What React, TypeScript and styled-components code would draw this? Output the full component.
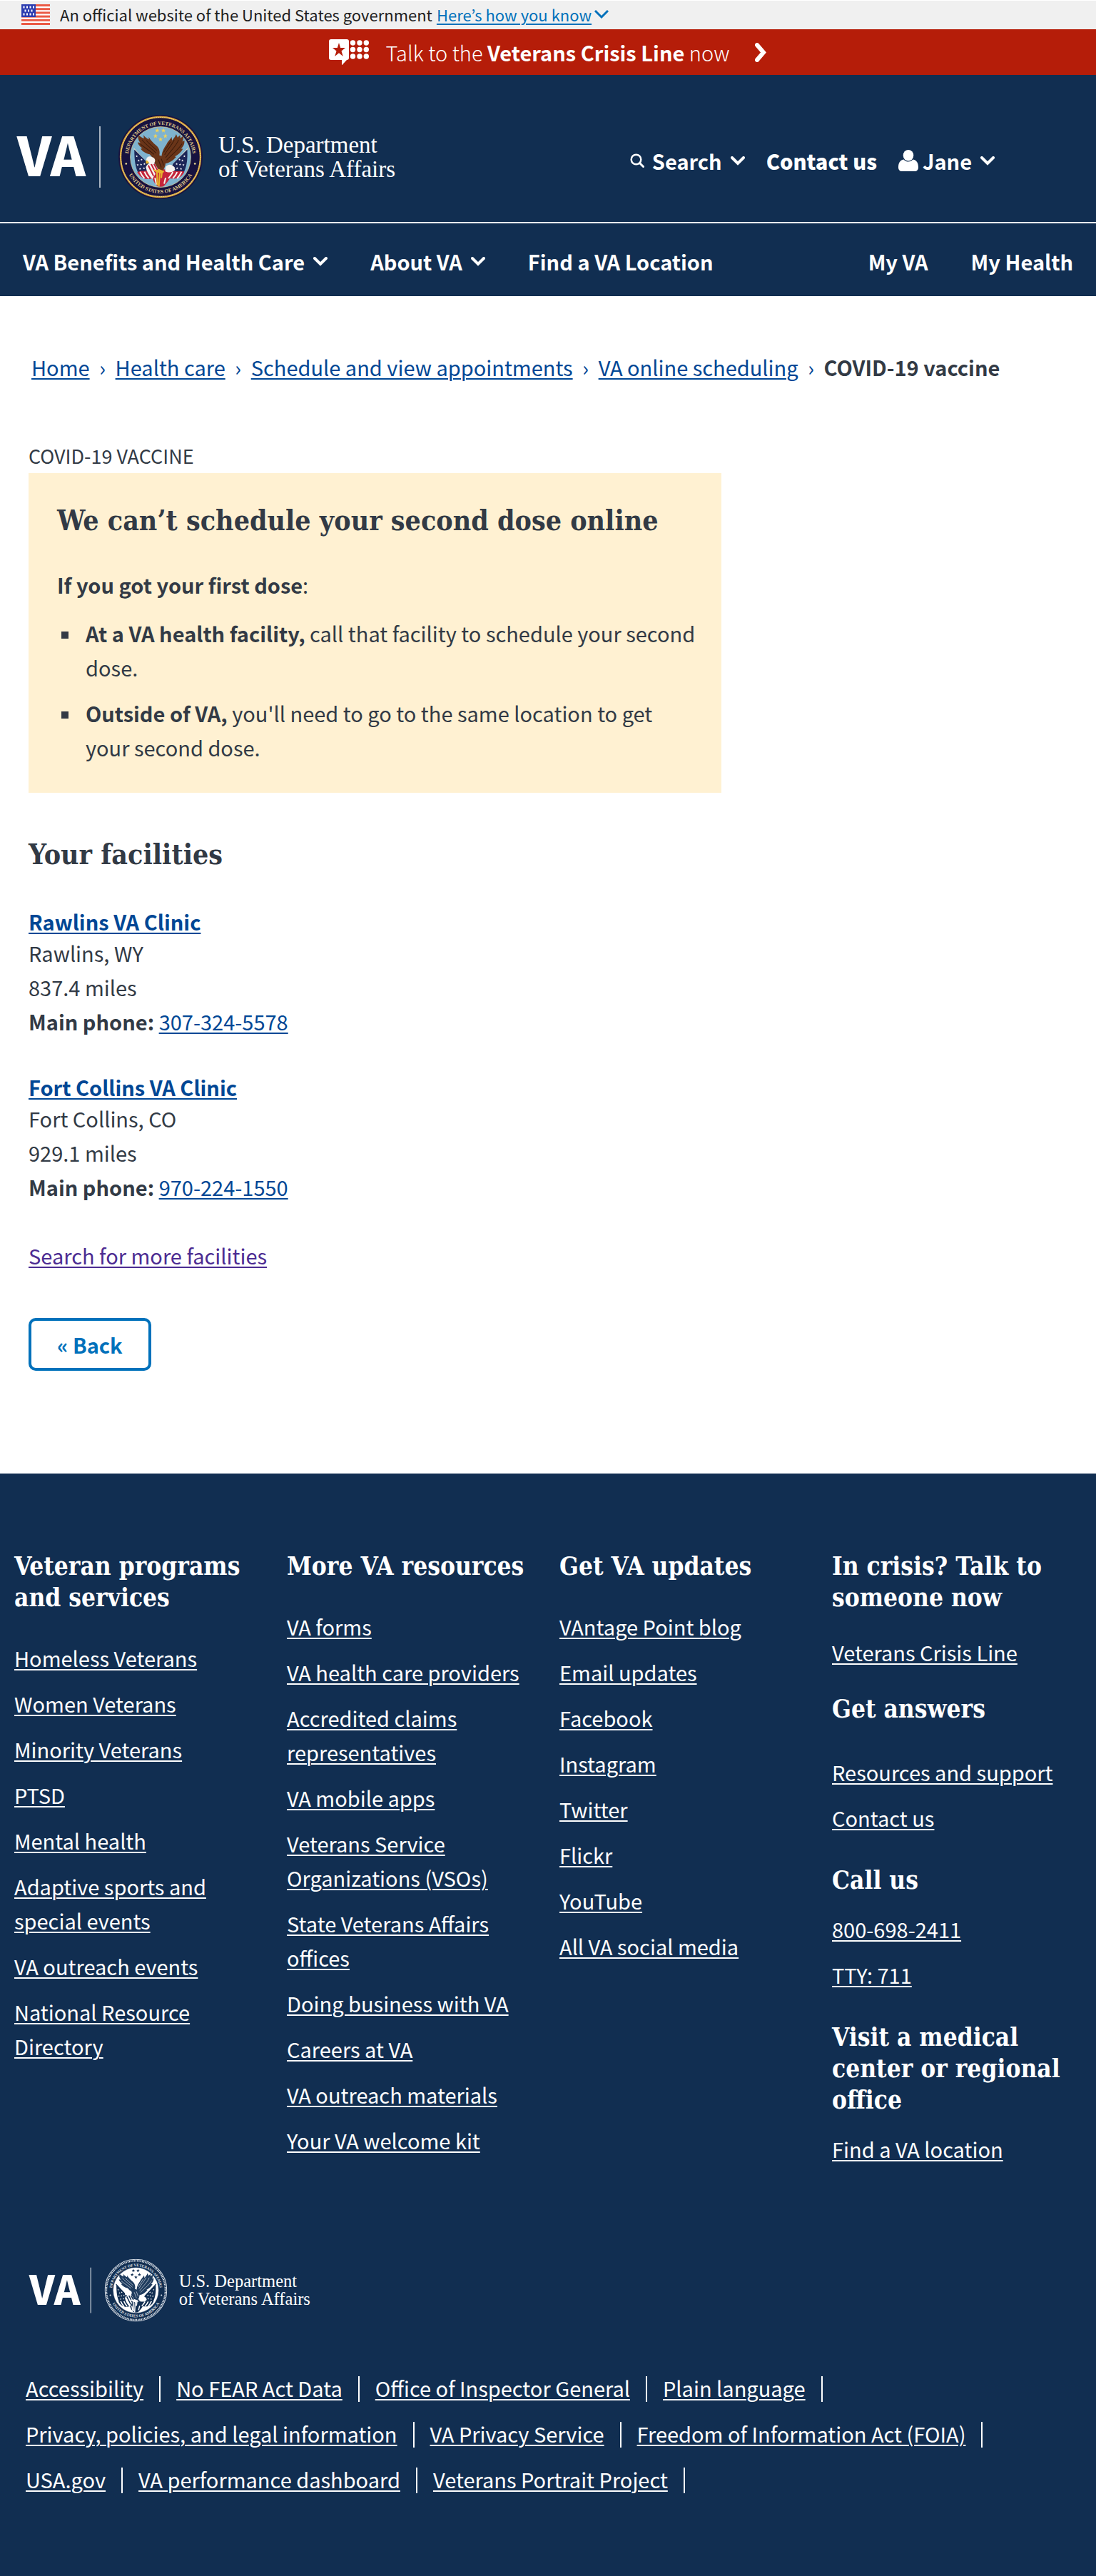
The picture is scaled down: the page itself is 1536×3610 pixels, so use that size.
import React from "react";
import styled, { createGlobalStyle } from "styled-components";

const sans = `"Noto Sans CJK KR", "Noto Sans", sans-serif`;
const slab = `"DejaVu Serif Condensed", "DejaVu Serif", serif`;
const navy = "#112e51";
const ink = "#323a45";
const linkBlue = "#004795";
const brightBlue = "#0071bb";

const GlobalStyle = createGlobalStyle`
  *, *::before, *::after { box-sizing: border-box; }
  body { margin: 0; background: #fff; color: ${ink}; font: 400 29px/48px ${sans}; }
  h1, h2, h3, p, ul, ol { margin: 0; padding: 0; }
  ul, ol { list-style: none; }
  a {
    color: ${linkBlue};
    text-decoration: underline;
    text-decoration-thickness: 2px;
    text-underline-offset: 3px;
  }
  button { font: inherit; color: inherit; background: none; border: 0; padding: 0; cursor: pointer; }
  svg { display: block; flex: none; }
`;

/* ---------- Government banner ---------- */

const GovBanner = styled.div`
  display: flex;
  align-items: center;
  height: 41px;
  padding: 0 30px 2px;
  border-top: 1px solid #fff;
  background: #f0f0f0;
  color: #212121;
  font-size: 22px;
  line-height: 36px;
`;

const BannerText = styled.span`
  margin: 0 6px 0 14px;
`;

const BannerToggle = styled.button`
  display: flex;
  align-items: center;
  color: ${brightBlue};
  text-decoration: underline;
  text-decoration-thickness: 2px;
  text-underline-offset: 3px;
  gap: 4px;
`;

/* ---------- Crisis line ---------- */

const CrisisLink = styled.a`
  display: flex;
  align-items: center;
  justify-content: center;
  height: 64px;
  background: #b51d09;
  color: #fff;
  font-weight: 300;
  text-decoration: none;
`;

const CrisisText = styled.span`
  margin: 0 36px 0 24px;
  b { font-weight: 700; }
`;

/* ---------- Header ---------- */

const Masthead = styled.header`
  background: ${navy};
  color: #fff;
`;

const MastheadTop = styled.div`
  display: flex;
  align-items: center;
  justify-content: space-between;
  height: 208px;
  padding: 24px 142px 0 24px;
  border-bottom: 2px solid #fff;
`;

const Tools = styled.div`
  display: flex;
  align-items: center;
  gap: 30px;
  padding-top: 10px;
  font-weight: 700;
`;

const Tool = styled.button<{ $gap: number }>`
  display: flex;
  align-items: center;
  gap: ${(p) => p.$gap}px;
  font-weight: 700;
`;

const MenuLabel = styled.span`
  display: flex;
  align-items: center;
  gap: 12px;
`;

const HeaderLink = styled.a<{ $heavy?: boolean }>`
  color: #fff;
  font-weight: ${(p) => (p.$heavy ? 900 : 700)};
  text-decoration: none;
`;

const NavBar = styled.nav`
  display: flex;
  align-items: center;
  gap: 60px;
  height: 102px;
  padding: 4px 32px 0;
`;

const NavButton = styled.button`
  display: flex;
  align-items: center;
  gap: 12px;
  font-weight: 700;
`;

const NavSpacer = styled.div`
  flex: 1;
  margin-right: -60px;
`;

/* ---------- Main ---------- */

const Main = styled.main`
  padding: 75px 40px 144px;
`;

const Crumbs = styled.ol`
  display: flex;
  flex-wrap: wrap;
  padding-left: 4px;
  margin-bottom: 77px;

  li { display: flex; }
  li + li::before {
    content: "›";
    width: 36px;
    text-align: center;
    color: ${linkBlue};
  }
`;

const CurrentCrumb = styled.span`
  font-weight: 700;
`;

const Content = styled.div`
  width: 66.667%;
`;

const PageLabel = styled.h1`
  font-size: 27px;
  font-weight: 400;
  line-height: 48px;
  text-transform: uppercase;
`;

const Title = styled.h2`
  font: 700 39px/52px ${slab};
`;

const Notice = styled.section`
  padding: 40px 32px 40px 40px;
  background: #fff1d2;
  p { margin: 40px 0 20px; }
`;

const BulletList = styled.ul`
  display: grid;
  gap: 16px;

  li {
    display: flex;
  }
  li::before {
    content: "";
    flex: none;
    width: 10px;
    height: 10px;
    margin: 22px 24px 0 6px;
    background: ${ink};
  }
`;

const Facilities = styled.section`
  padding-top: 60px;
`;

const FacilityList = styled.ul`
  display: grid;
  gap: 48px;
  margin: 48px 0;
`;

const FacilityName = styled.h3`
  font-size: 29px;
  font-weight: 700;
  line-height: 40px;
`;

const VisitedLink = styled.a`
  color: #4c2c92;
`;

const BackButton = styled.button`
  display: block;
  margin-top: 64px;
  height: 74px;
  padding: 0 36px;
  border: 4px solid ${brightBlue};
  border-radius: 10px;
  color: ${brightBlue};
  font-weight: 700;
`;

/* ---------- Footer ---------- */

const FooterArea = styled.footer`
  padding: 108px 28px 116px 20px;
  background: ${navy};
  color: #fff;
  a { color: #fff; }
`;

const FooterGrid = styled.div`
  display: grid;
  grid-template-columns: repeat(4, 1fr);
  column-gap: 40px;
  margin-bottom: 130px;
`;

const FooterHeading = styled.h2<{ $top?: number }>`
  margin-top: ${(p) => p.$top ?? 0}px;
  font: 700 35px/44px ${slab};
`;

const FooterList = styled.ul<{ $top?: number }>`
  display: grid;
  gap: 16px;
  margin-top: ${(p) => p.$top ?? 38}px;
`;

const FooterBase = styled.div`
  padding: 0 8px 0 16px;
`;

const FooterLogo = styled.div`
  padding-left: 5px;
  margin-bottom: 76px;
`;

const LegalLinks = styled.ul`
  display: flex;
  flex-wrap: wrap;
  gap: 28px 22px;

  li {
    padding: 0 22px 4px 0;
    border-right: 2px solid #fff;
    line-height: 32px;
  }
`;

/* ---------- Drawings ---------- */

const Chevron = () => (
  <svg width="20" height="13" viewBox="0 0 20 13" fill="none" stroke="currentColor" strokeWidth="4" aria-hidden="true">
    <path d="M2 2l8 8 8-8" strokeLinecap="round" strokeLinejoin="miter" />
  </svg>
);

const ThinChevron = () => (
  <svg width="20" height="13" viewBox="0 0 20 13" fill="none" stroke="currentColor" strokeWidth="3" aria-hidden="true">
    <path d="M1 1l9 9 9-9" />
  </svg>
);

const RightChevron = () => (
  <svg width="17" height="27" viewBox="0 0 17 27" fill="none" stroke="currentColor" strokeWidth="6" aria-hidden="true">
    <path d="M3 3l9 10.500L3 24" strokeLinecap="round" />
  </svg>
);

const SearchIcon = () => (
  <svg width="20" height="20" viewBox="0 0 20 20" fill="none" stroke="currentColor" strokeWidth="2.500" aria-hidden="true">
    <circle cx="8.500" cy="8.500" r="6.800" />
    <path d="M13.500 13.500l5 5" strokeWidth="3" strokeLinecap="round" />
  </svg>
);

const UserIcon = () => (
  <svg width="28" height="30" viewBox="0 0 28 30" fill="currentColor" aria-hidden="true">
    <ellipse cx="14" cy="7.700" rx="7.300" ry="7.700" />
    <path d="M7.500 13.500C2 14.500 0 19 0 24.500 0 28 2 30 5 30h18c3 0 5-2 5-5.500 0-5.500-2-10-7.500-11-1.800 2-4 3-6.500 3s-4.700-1-6.500-3z" />
  </svg>
);

const Flag = () => (
  <svg width="40" height="29" viewBox="0 0 40 29" aria-hidden="true">
    <rect width="40" height="29" fill="#fff" />
    {[0, 1, 2, 3, 4, 5].map((i) => (
      <rect key={i} y={i * 5.2} width="40" height="3" fill="#ea5a45" />
    ))}
    <rect width="20" height="18" fill="#2c3db0" />
    {[3.5, 8.5, 13.5].map((y, row) =>
      (row === 1 ? [5.5, 10, 14.5] : [3.5, 8, 12.5, 17]).map((x) => (
        <rect key={`${x}-${y}`} x={x - 1} y={y - 1} width="2" height="3" fill="#fff" />
      ))
    )}
  </svg>
);

const CrisisIcon = () => (
  <svg width="56" height="36" viewBox="0 0 56 36" fill="#fff" aria-hidden="true">
    <path d="M3 0h22a3 3 0 0 1 3 3v23a3 3 0 0 1-3 3l-6.500 7H18v-7H3a3 3 0 0 1-3-3V3a3 3 0 0 1 3-3z" />
    <path fill="#b51d09" d="M14 5l2.200 7H23l-5.500 4.400L19.800 24 14 19.300 8.200 24l2.300-7.600L5 12h6.800z" />
    {[5, 14.5, 24].map((y) =>
      [33.5, 43, 52.300].map((x) => <circle key={`${x}-${y}`} cx={x} cy={y} r="3.700" />)
    )}
  </svg>
);

const starPath = (cx: number, cy: number, r: number) => {
  const points: string[] = [];
  for (let i = 0; i < 10; i += 1) {
    const radius = i % 2 === 0 ? r : r * 0.42;
    const angle = (Math.PI / 5) * i - Math.PI / 2;
    points.push(`${cx + radius * Math.cos(angle)},${cy + radius * Math.sin(angle)}`);
  }
  return `M${points.join("L")}Z`;
};

type SealColors = {
  rim: string;
  ring: string;
  rope: number;
  band: string;
  letters: string;
  sky: string;
  star: string;
  wing: string;
  feather: string;
  head: string;
  canton: string;
  dot: string;
  red: string;
  pole: string;
  beak: string;
};

const fullColor: SealColors = {
  rim: "#1a1440",
  ring: "#dba63a",
  rope: 3,
  band: "#17123f",
  letters: "#e0cd8c",
  sky: "#7fb3cf",
  star: "#f0d257",
  wing: "#6a3519",
  feather: "#3d1c0c",
  head: "#f6f3ef",
  canton: "#1c2657",
  dot: "#ffffff",
  red: "#c5243a",
  pole: "#e4dcc4",
  beak: "#e9b62c",
};

const oneColor: SealColors = {
  rim: "#d8dee6",
  ring: navy,
  rope: 9,
  band: navy,
  letters: "#e2e7ed",
  sky: "#ffffff",
  star: navy,
  wing: "#1f3c5e",
  feather: "#c5ced8",
  head: "#ffffff",
  canton: navy,
  dot: "#ffffff",
  red: navy,
  pole: navy,
  beak: "#ffffff",
};

const Seal = ({ id, c }: { id: string; c: SealColors }) => (
  <g>
    <defs>
      <path id={`${id}-top`} d="M41 175A134 134 0 0 1 309 175" />
      <path id={`${id}-bottom`} d="M24 175A151 151 0 0 0 326 175" />
      <clipPath id={`${id}-disc`}>
        <circle cx="175" cy="175" r="124" />
      </clipPath>
    </defs>
    <circle cx="175" cy="175" r="173" fill={c.band} stroke={c.rim} strokeWidth="4" />
    <circle cx="175" cy="175" r="166" fill="none" stroke={c.ring} strokeWidth="7" />
    <circle cx="175" cy="175" r="165" fill="none" stroke={c.letters} strokeWidth={c.rope} strokeDasharray="5 4" />
    <circle cx="175" cy="175" r="126" fill={c.sky} stroke={c.letters} strokeWidth="2" />
    <g fill={c.letters} fontFamily="Liberation Serif, serif" fontWeight="700" textAnchor="middle">
      <text fontSize="21">
        <textPath href={`#${id}-top`} startOffset="50%">DEPARTMENT OF VETERANS AFFAIRS</textPath>
      </text>
      <text fontSize="22">
        <textPath href={`#${id}-bottom`} startOffset="50%">UNITED STATES OF AMERICA</textPath>
      </text>
    </g>
    <circle cx="32" cy="203" r="4" fill={c.letters} />
    <circle cx="318" cy="203" r="4" fill={c.letters} />
    <g fill={c.star}>
      <path d={starPath(161, 65, 10)} />
      <path d={starPath(187, 65, 10)} />
      <path d={starPath(154, 88, 10)} />
      <path d={starPath(195, 88, 10)} />
      <path d={starPath(175, 102, 10)} />
    </g>
    <g clipPath={`url(#${id}-disc)`}>
      <path d="M64 140L150 236M288 140L200 236" stroke={c.pole} strokeWidth="4" />
      <path fill={c.canton} d="M66 144C66 186 70 220 84 244C100 230 120 236 136 226L126 204Z" />
      <path fill={c.canton} d="M286 144C288 186 284 216 270 242C252 230 232 238 214 226L228 202Z" />
      <g fill={c.dot}>
        {[[76, 172], [84, 190], [96, 186], [80, 208], [94, 206], [108, 204], [90, 224], [106, 222], [120, 218]].map(
          ([x, y]) => (
            <React.Fragment key={`${x}-${y}`}>
              <path d={starPath(x, y, 5)} />
              <path d={starPath(350 - x, y, 5)} />
            </React.Fragment>
          )
        )}
      </g>
      <path fill={c.red} d="M78 238C100 226 124 240 160 226L190 226C224 238 250 230 274 236C264 262 240 268 214 264C204 280 188 300 176 304C160 298 148 284 142 264C116 272 92 264 78 238Z" />
      <path
        d="M90 236C94 246 100 256 108 264M108 236C112 246 118 256 126 264M126 238C130 248 138 256 144 264M262 236C258 246 252 256 244 264M244 238C240 248 234 256 226 264M226 238C222 248 214 256 208 264M152 262L158 290M196 262L190 286"
        fill="none"
        stroke={c.head}
        strokeWidth="6"
      />
      <path fill={c.head} d="M114 218C118 202 136 196 152 204L166 228L140 266C130 256 118 238 114 218Z" />
      <path d="M124 210L146 254M136 204L156 244M148 204L162 230" stroke={c.red} strokeWidth="6" />
      <path fill={c.head} d="M196 216C210 202 226 204 236 226C228 240 208 242 194 234Z" />
    </g>
    <path
      fill={c.wing}
      d="M84 84C92 92 98 96 106 98L104 84C112 94 118 98 126 102L126 92C134 106 146 118 156 126C168 136 174 150 170 168C160 176 150 172 142 178L130 164C112 160 98 150 92 140L100 139C88 131 82 123 80 114L91 116C82 106 80 94 84 84Z"
    />
    <path
      fill={c.wing}
      d="M240 80C236 92 228 98 223 107L221 92C212 106 204 112 200 122C190 136 182 150 180 166C176 184 186 196 196 202C212 200 228 188 240 175L234 173C250 165 262 153 268 141L260 141C270 131 276 119 274 106L266 111C270 102 270 96 268 88L258 97L256 84L246 94Z"
    />
    <path fill={c.wing} d="M140 176C154 166 184 158 196 196C196 212 190 226 182 234L166 228C160 214 148 202 140 176Z" />
    <path
      d="M98 104C112 122 130 134 156 158M92 122C108 136 124 144 148 164M116 106C128 122 146 134 160 148M232 104C222 126 204 142 192 166M250 104C240 130 216 150 196 178M264 120C248 146 224 164 200 188M216 112C206 130 194 144 188 156M166 186L178 218M178 182L188 210"
      fill="none"
      stroke={c.feather}
      strokeWidth="3"
    />
    <path fill={c.head} d="M116 190C114 176 128 168 140 176C150 178 156 188 150 198C142 208 126 206 116 190Z" />
    <path fill={c.beak} d="M118 188C112 192 112 198 118 204L128 198Z" />
    <path d="M160 232L162 292M172 236L168 298M182 232L178 262" stroke={c.beak} strokeWidth="6" />
    <path d="M150 230L176 240M166 228L186 236" stroke={c.beak} strokeWidth="7" strokeLinecap="round" />
  </g>
);

const LogoSvg = styled.svg`
  overflow: visible;
`;

const VaLogo = ({ id, width, colors }: { id: string; width: number; colors: SealColors }) => (
  <LogoSvg width={width} viewBox="0 0 530 120" role="img" aria-label="VA, U.S. Department of Veterans Affairs">
    <text x="0" y="87" fill="#fff" fontFamily={sans} fontSize="75" fontWeight="900">VA</text>
    <path d="M116 17v86" stroke="#a9b4c2" strokeWidth="2" />
    <svg x="142" y="1" width="118" height="118" viewBox="0 0 350 350">
      <Seal id={id} c={colors} />
    </svg>
    <g fill="#fff" fontFamily="Liberation Serif, serif" fontSize="33">
      <text x="282" y="54">U.S. Department</text>
      <text x="282" y="88">of Veterans Affairs</text>
    </g>
  </LogoSvg>
);

/* ---------- Data ---------- */

const crumbs = ["Home", "Health care", "Schedule and view appointments", "VA online scheduling"];

const facilities = [
  { name: "Rawlins VA Clinic", city: "Rawlins, WY", distance: "837.4 miles", phone: "307-324-5578" },
  { name: "Fort Collins VA Clinic", city: "Fort Collins, CO", distance: "929.1 miles", phone: "970-224-1550" },
];

const footerColumns = [
  {
    title: "Veteran programs and services",
    links: [
      "Homeless Veterans",
      "Women Veterans",
      "Minority Veterans",
      "PTSD",
      "Mental health",
      "Adaptive sports and special events",
      "VA outreach events",
      "National Resource Directory",
    ],
  },
  {
    title: "More VA resources",
    links: [
      "VA forms",
      "VA health care providers",
      "Accredited claims representatives",
      "VA mobile apps",
      "Veterans Service Organizations (VSOs)",
      "State Veterans Affairs offices",
      "Doing business with VA",
      "Careers at VA",
      "VA outreach materials",
      "Your VA welcome kit",
    ],
  },
  {
    title: "Get VA updates",
    links: [
      "VAntage Point blog",
      "Email updates",
      "Facebook",
      "Instagram",
      "Twitter",
      "Flickr",
      "YouTube",
      "All VA social media",
    ],
  },
];

const contactGroups = [
  { title: "In crisis? Talk to someone now", top: 0, listTop: 30, links: ["Veterans Crisis Line"] },
  { title: "Get answers", top: 34, listTop: 42, links: ["Resources and support", "Contact us"] },
  { title: "Call us", top: 42, listTop: 22, links: ["800-698-2411", "TTY: 711"] },
  { title: "Visit a medical center or regional office", top: 42, listTop: 22, links: ["Find a VA location"] },
];

const legalLinks = [
  "Accessibility",
  "No FEAR Act Data",
  "Office of Inspector General",
  "Plain language",
  "Privacy, policies, and legal information",
  "VA Privacy Service",
  "Freedom of Information Act (FOIA)",
  "USA.gov",
  "VA performance dashboard",
  "Veterans Portrait Project",
];

const LinkItems = ({ links }: { links: string[] }) => (
  <>
    {links.map((text) => (
      <li key={text}>
        <a href="#">{text}</a>
      </li>
    ))}
  </>
);

export default function App() {
  return (
    <>
      <GlobalStyle />
      <GovBanner>
        <Flag />
        <BannerText>An official website of the United States government</BannerText>
        <BannerToggle type="button">
          Here’s how you know
          <ThinChevron />
        </BannerToggle>
      </GovBanner>

      <CrisisLink href="#">
        <CrisisIcon />
        <CrisisText>
          Talk to the <b>Veterans Crisis Line</b> now
        </CrisisText>
        <RightChevron />
      </CrisisLink>

      <Masthead>
        <MastheadTop>
          <VaLogo id="seal-header" width={530} colors={fullColor} />
          <Tools>
            <Tool type="button" $gap={11}>
              <SearchIcon />
              <MenuLabel>
                Search
                <Chevron />
              </MenuLabel>
            </Tool>
            <HeaderLink href="#" $heavy>Contact us</HeaderLink>
            <Tool type="button" $gap={6}>
              <UserIcon />
              <MenuLabel>
                Jane
                <Chevron />
              </MenuLabel>
            </Tool>
          </Tools>
        </MastheadTop>
        <NavBar aria-label="Main">
          <NavButton type="button">
            VA Benefits and Health Care
            <Chevron />
          </NavButton>
          <NavButton type="button">
            About VA
            <Chevron />
          </NavButton>
          <HeaderLink href="#">Find a VA Location</HeaderLink>
          <NavSpacer />
          <HeaderLink href="#">My VA</HeaderLink>
          <HeaderLink href="#">My Health</HeaderLink>
        </NavBar>
      </Masthead>

      <Main>
        <nav aria-label="Breadcrumb">
          <Crumbs>
            <LinkItems links={crumbs} />
            <li>
              <CurrentCrumb aria-current="page">COVID-19 vaccine</CurrentCrumb>
            </li>
          </Crumbs>
        </nav>
        <Content>
          <PageLabel>COVID-19 vaccine</PageLabel>
          <Notice>
            <Title>We can’t schedule your second dose online</Title>
            <p>
              <strong>If you got your first dose</strong>:
            </p>
            <BulletList>
              <li>
                <span>
                  <strong>At a VA health facility,</strong> call that facility to schedule your second dose.
                </span>
              </li>
              <li>
                <span>
                  <strong>Outside of VA,</strong> you'll need to go to the same location to get your second dose.
                </span>
              </li>
            </BulletList>
          </Notice>
          <Facilities>
            <Title>Your facilities</Title>
            <FacilityList>
              {facilities.map((f) => (
                <li key={f.name}>
                  <FacilityName>
                    <a href="#">{f.name}</a>
                  </FacilityName>
                  <div>{f.city}</div>
                  <div>{f.distance}</div>
                  <div>
                    <strong>Main phone:</strong> <a href={`tel:${f.phone}`}>{f.phone}</a>
                  </div>
                </li>
              ))}
            </FacilityList>
            <VisitedLink href="#">Search for more facilities</VisitedLink>
            <BackButton type="button">« Back</BackButton>
          </Facilities>
        </Content>
      </Main>

      <FooterArea>
        <FooterGrid>
          {footerColumns.map((col) => (
            <div key={col.title}>
              <FooterHeading>{col.title}</FooterHeading>
              <FooterList>
                <LinkItems links={col.links} />
              </FooterList>
            </div>
          ))}
          <div>
            {contactGroups.map((group) => (
              <React.Fragment key={group.title}>
                <FooterHeading $top={group.top}>{group.title}</FooterHeading>
                <FooterList $top={group.listTop}>
                  <LinkItems links={group.links} />
                </FooterList>
              </React.Fragment>
            ))}
          </div>
        </FooterGrid>
        <FooterBase>
          <FooterLogo>
            <VaLogo id="seal-footer" width={394} colors={oneColor} />
          </FooterLogo>
          <LegalLinks>
            <LinkItems links={legalLinks} />
          </LegalLinks>
        </FooterBase>
      </FooterArea>
    </>
  );
}
